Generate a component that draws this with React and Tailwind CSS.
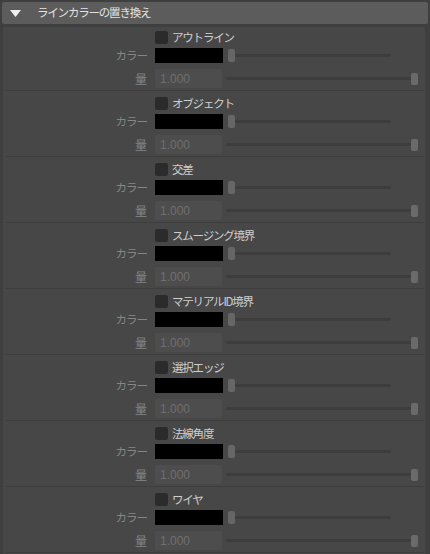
import React from "react";

const items = [
  "アウトライン",
  "オブジェクト",
  "交差",
  "スムージング境界",
  "マテリアルID境界",
  "選択エッジ",
  "法線角度",
  "ワイヤ",
];

const Section = ({ name, first }) => {
  return (
    <div className={first ? "h-[64px] pt-[4px]" : "h-[66px] pt-[6px]"}>
      <div className="flex items-center h-[13px]">
        <div className="w-[144px]" />
        <div className="ml-[8px] w-[13px] h-[13px] rounded-[2px] bg-[#2b2b2b]" />
        <span className="ml-[4px] text-[11.5px] tracking-[-1.2px] leading-none text-[#cfcfcf]">{name}</span>
      </div>

      <div className="flex items-center h-[15px] mt-[4px]">
        <div className="w-[144px] text-right text-[11.5px] tracking-[-1px] leading-none text-[#858585]">カラー</div>
        <div className="ml-[8px] w-[68px] h-[15px] bg-black" />
        <div className="ml-[5px] flex items-center">
          <div className="w-[7px] h-[13px] rounded-[2px] bg-[#666666]" />
          <div className="w-[156px] h-[3px] rounded-full bg-[#3d3d3d]" />
        </div>
      </div>

      <div className="flex items-center h-[19px] mt-[6px]">
        <div className="w-[144px] text-right text-[12px] leading-none text-[#858585]">量</div>
        <div
          className="ml-[8px] w-[67px] h-[19px] rounded-[2px] bg-[#4d4d4d] flex items-center pl-[5px] text-[12px] text-[#6f6f6f]"
          style={{ fontFamily: '"Liberation Sans", sans-serif' }}
        >
          1.000
        </div>
        <div className="ml-[4px] flex items-center">
          <div className="w-[185px] h-[3px] rounded-full bg-[#3d3d3d]" />
          <div className="w-[7px] h-[12px] rounded-[2px] bg-[#6a6a6a]" />
        </div>
      </div>

      <div className="ml-[3px] mr-[1px] mt-[2px] h-px bg-[#3d3d3d]" />
    </div>
  );
};

const App = () => {
  return (
    <div
      className="w-[430px] h-[554px] overflow-hidden bg-[#3f3f3f] pt-[2px]"
      style={{ fontFamily: '"Noto Sans CJK JP", "Noto Sans", sans-serif' }}
    >
      <div className="mx-[2px] h-[22px] rounded-[2px] bg-[#5c5c5c] flex items-center">
        <svg width="11" height="7" viewBox="0 0 11 7" className="ml-[8px]">
          <polygon points="0,0 11,0 5.5,7" fill="#f0f0f0" />
        </svg>
        <span className="ml-[16px] text-[11.5px] tracking-[-1.2px] leading-none text-[#e2e2e2]">ラインカラーの置き換え</span>
      </div>

      <div className="mt-[3px] ml-[3px] w-[422px] h-[530px] bg-[#474747]">
        {items.map((name, i) => (
          <Section key={name} name={name} first={i === 0} />
        ))}
      </div>
    </div>
  );
};

export default App;
